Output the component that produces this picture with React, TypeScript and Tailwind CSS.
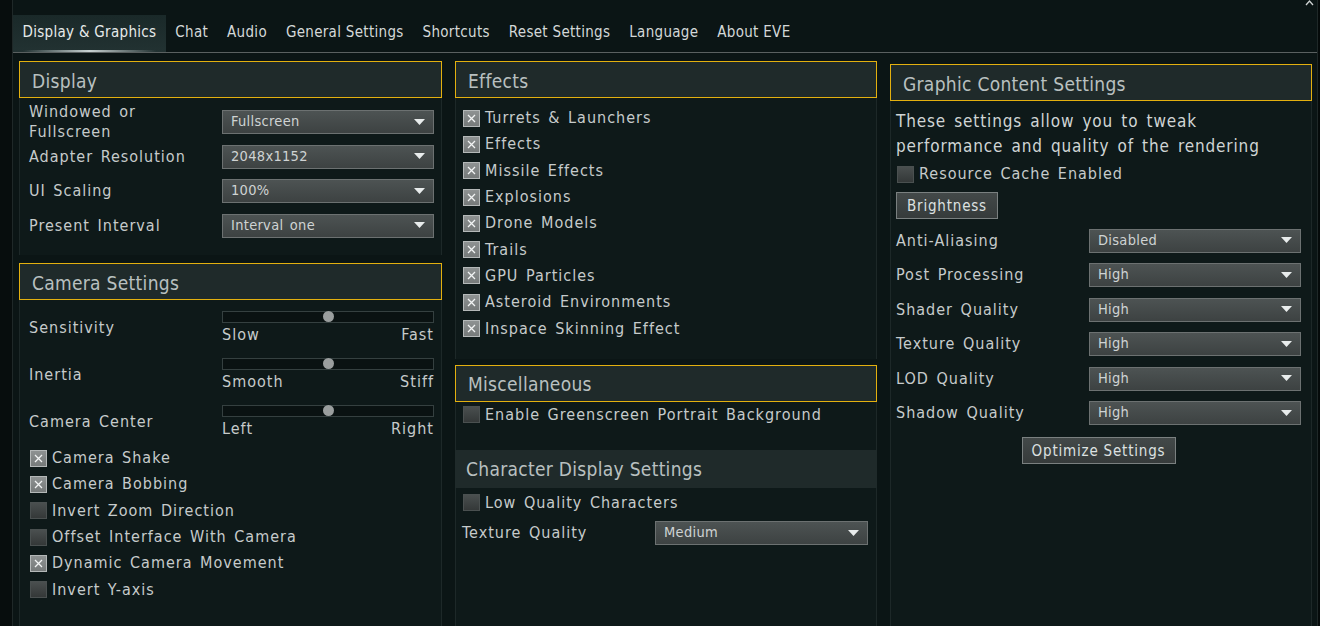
import React from "react";

const font = "font-['DejaVu_Sans_Condensed','DejaVu_Sans',sans-serif]";

const tabs = [
  "Display & Graphics",
  "Chat",
  "Audio",
  "General Settings",
  "Shortcuts",
  "Reset Settings",
  "Language",
  "About EVE",
];

function Header({ title, gold = true }: { title: string; gold?: boolean }) {
  return (
    <div
      className={`h-[37px] flex items-center px-[12px] bg-[#1f2a2a] text-[19px] text-[#b9c0c0] tracking-[0.3px] ${
        gold ? "border border-[#e3b00f]" : ""
      }`}
    >
      <span className="pt-[3px]">{title}</span>
    </div>
  );
}

function Checkbox({ checked }: { checked: boolean }) {
  return checked ? (
    <div className="w-[17px] h-[17px] shrink-0 border border-[#b4b8b8] bg-gradient-to-b from-[#8e9292] to-[#767a7a] flex items-center justify-center">
      <svg width="11" height="11" viewBox="0 0 11 11">
        <path d="M2 2 L9 9 M9 2 L2 9" stroke="#f2f4f4" strokeWidth="1.3" />
      </svg>
    </div>
  ) : (
    <div className="w-[17px] h-[17px] shrink-0 border border-[#4a5050] bg-gradient-to-b from-[#4a4f4f] to-[#343838]" />
  );
}

function CheckRow({ label, checked }: { label: string; checked: boolean }) {
  return (
    <div className="h-[26.3px] flex items-center gap-[5px] text-[16px] text-[#c6cbcb] tracking-[1px] [word-spacing:2px]">
      <Checkbox checked={checked} />
      <span>{label}</span>
    </div>
  );
}

function Dropdown({ value, className = "" }: { value: string; className?: string }) {
  return (
    <div
      className={`h-[24px] w-[212px] shrink-0 flex items-center justify-between pl-[8px] pr-[8px] border border-[#6c7171] bg-gradient-to-b from-[#4d5353] to-[#3d4242] text-[14.5px] text-[#cfd3d3] tracking-[0.3px] ${className}`}
    >
      <span>{value}</span>
      <svg width="11" height="7" viewBox="0 0 11 7">
        <path d="M0 0 H11 L5.5 6 Z" fill="#e8ecec" />
      </svg>
    </div>
  );
}

function SelectRow({
  label,
  value,
  offset,
}: {
  label: string;
  value: string;
  offset: string;
}) {
  return (
    <div className="h-[34.5px] flex items-center text-[16px] text-[#c6cbcb] tracking-[1px] [word-spacing:2px]">
      <div className={`${offset} shrink-0 leading-[20px]`}>{label}</div>
      <Dropdown value={value} />
    </div>
  );
}

function SliderRow({ label, low, high }: { label: string; low: string; high: string }) {
  return (
    <div className="h-[34px] flex items-center text-[16px] text-[#c6cbcb] tracking-[1px] [word-spacing:2px]">
      <div className="w-[193px] shrink-0">{label}</div>
      <div className="w-[212px] flex flex-col">
        <div className="relative h-[12px] border border-[#354040] bg-[#0a1212]">
          <div className="absolute left-[100px] top-[-1px] w-[11px] h-[11px] rounded-full bg-[#9a9e9e]" />
        </div>
        <div className="flex justify-between leading-[22px] pt-[1px]">
          <span>{low}</span>
          <span>{high}</span>
        </div>
      </div>
    </div>
  );
}

function Button({ label, className = "" }: { label: string; className?: string }) {
  return (
    <div
      className={`h-[27px] flex items-center justify-center border border-[#7a8080] bg-gradient-to-b from-[#434949] to-[#363b3b] text-[15px] text-[#dde1e1] tracking-[0.8px] ${className}`}
    >
      {label}
    </div>
  );
}

const panel = "bg-[#0e1919] border-x border-[#1d2828]";

export default function App() {
  return (
    <div className={`w-[1320px] h-[626px] overflow-hidden flex bg-[#050a0a] ${font}`}>
      <div className="w-[12px] shrink-0 bg-[#070d0d]" />
      <div className="relative w-[1306px] shrink-0 flex flex-col bg-[#0b1515] border-x border-[#1f2828]">
        {/* collapse glyph */}
        <svg className="absolute right-[3px] top-0" width="9" height="6" viewBox="0 0 9 6">
          <path d="M1 5 L4.5 1 L8 5" stroke="#d0d4d4" strokeWidth="1.3" fill="none" />
        </svg>

        {/* tabs */}
        <div className="h-[53px] shrink-0 flex items-end border-b border-[#5a6060]">
          {tabs.map((t, i) => (
            <div
              key={t}
              className={`relative h-[37px] px-[9.5px] flex items-center text-[15px] tracking-[0.3px] ${
                i === 0
                  ? "bg-gradient-to-b from-[#1a2929] to-[#223232] text-[#e6eaea]"
                  : "text-[#d4d8d8]"
              }`}
            >
              <span className="pb-[2px]">{t}</span>
              {i === 0 && (
                <div className="absolute left-[10px] right-[10px] bottom-0 h-[2px] bg-gradient-to-r from-transparent via-[#c8d2d2] to-transparent" />
              )}
            </div>
          ))}
        </div>

        {/* columns */}
        <div className="flex-1 flex gap-[13px] pl-[6px] pt-[8px]">
          {/* column 1 */}
          <div className="w-[423px] flex flex-col">
            <Header title="Display" />
            <div className={`${panel} pl-[9px] pt-[7px] pb-[12px]`}>
              <SelectRow label={"Windowed or\nFullscreen"} value="Fullscreen" offset="w-[193px] whitespace-pre-line" />
              <SelectRow label="Adapter Resolution" value="2048x1152" offset="w-[193px]" />
              <SelectRow label="UI Scaling" value="100%" offset="w-[193px]" />
              <SelectRow label="Present Interval" value="Interval one" offset="w-[193px]" />
            </div>
            <div className="h-[8px]" />
            <Header title="Camera Settings" />
            <div className={`${panel} flex-1 pl-[9px] pt-[11px]`}>
              <div className="flex flex-col gap-[13px]">
                <SliderRow label="Sensitivity" low="Slow" high="Fast" />
                <SliderRow label="Inertia" low="Smooth" high="Stiff" />
                <SliderRow label="Camera Center" low="Left" high="Right" />
              </div>
              <div className="pt-[6px] pl-[1px]">
                <CheckRow label="Camera Shake" checked />
                <CheckRow label="Camera Bobbing" checked />
                <CheckRow label="Invert Zoom Direction" checked={false} />
                <CheckRow label="Offset Interface With Camera" checked={false} />
                <CheckRow label="Dynamic Camera Movement" checked />
                <CheckRow label="Invert Y-axis" checked={false} />
              </div>
            </div>
          </div>

          {/* column 2 */}
          <div className="w-[422px] flex flex-col">
            <Header title="Effects" />
            <div className={`${panel} pl-[7px] pt-[7px] pb-[17px]`}>
              <CheckRow label="Turrets & Launchers" checked />
              <CheckRow label="Effects" checked />
              <CheckRow label="Missile Effects" checked />
              <CheckRow label="Explosions" checked />
              <CheckRow label="Drone Models" checked />
              <CheckRow label="Trails" checked />
              <CheckRow label="GPU Particles" checked />
              <CheckRow label="Asteroid Environments" checked />
              <CheckRow label="Inspace Skinning Effect" checked />
            </div>
            <div className="h-[6px]" />
            <Header title="Miscellaneous" />
            <div className={`${panel} h-[48px] pl-[7px]`}>
              <CheckRow label="Enable Greenscreen Portrait Background" checked={false} />
            </div>
            <div className="h-[38px] flex items-center px-[11px] bg-[#1f2a2a] text-[19px] text-[#b9c0c0] tracking-[0.3px]">
              <span className="pt-[2px]">Character Display Settings</span>
            </div>
            <div className={`${panel} flex-1 pl-[7px] pt-[2px]`}>
              <CheckRow label="Low Quality Characters" checked={false} />
              <div className="h-[34.5px] flex items-center text-[16px] text-[#c6cbcb] tracking-[1px] [word-spacing:2px] -ml-[1px]">
                <div className="w-[193px] shrink-0">Texture Quality</div>
                <Dropdown value="Medium" className="w-[213px]" />
              </div>
            </div>
          </div>

          {/* column 3 */}
          <div className="w-[422px] flex flex-col pt-[3px]">
            <Header title="Graphic Content Settings" />
            <div className={`${panel} flex-1 pl-[5px] pt-[8px]`}>
              <p className="text-[17px] leading-[25px] text-[#d0d5d5] tracking-[0.85px] [word-spacing:2.5px]">
                These settings allow you to tweak
                <br />
                performance and quality of the rendering
              </p>
              <div className="pl-[1px] pt-[2px]">
                <CheckRow label="Resource Cache Enabled" checked={false} />
              </div>
              <Button label="Brightness" className="w-[102px] mt-[5px]" />
              <div className="pt-[4px]">
                <SelectRow label="Anti-Aliasing" value="Disabled" offset="w-[193px]" />
                <SelectRow label="Post Processing" value="High" offset="w-[193px]" />
                <SelectRow label="Shader Quality" value="High" offset="w-[193px]" />
                <SelectRow label="Texture Quality" value="High" offset="w-[193px]" />
                <SelectRow label="LOD Quality" value="High" offset="w-[193px]" />
                <SelectRow label="Shadow Quality" value="High" offset="w-[193px]" />
              </div>
              <div className="flex justify-center pr-[10px] pt-[7px]">
                <Button label="Optimize Settings" className="w-[154px]" />
              </div>
            </div>
          </div>
        </div>
      </div>
    </div>
  );
}
